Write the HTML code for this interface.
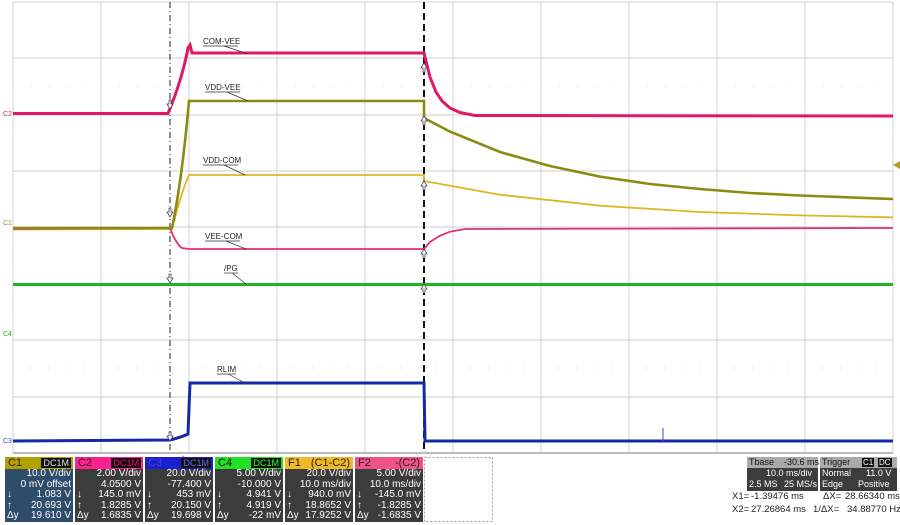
<!DOCTYPE html>
<html><head><meta charset="utf-8"><style>
body{margin:0;width:900px;height:525px;background:#fff;overflow:hidden;font-family:"Liberation Sans",sans-serif;position:relative}
svg{position:absolute;left:0;top:0}
.box{position:absolute;top:457px;width:68px;height:65px;font-size:10px;color:#fff}
.hd{height:12px;line-height:12px;padding-left:3px;position:relative;font-size:11px}
.hd b{position:absolute;right:2px;top:1px;height:10px;line-height:10px;background:#111;font-weight:normal;font-size:9px;padding:0 2px}
.bd{background:#3c3c3c;height:53px;padding-top:0}
.r{height:10.5px;line-height:10.5px;text-align:right;padding-right:2px;position:relative}
.r i{position:absolute;left:2px;font-style:normal}
.tb{position:absolute;font-size:9px;color:#fff;line-height:11px;white-space:nowrap}
.cur{position:absolute;font-size:9.5px;color:#222;white-space:nowrap;line-height:12px}
</style></head><body>
<svg width="900" height="525" viewBox="0 0 900 525">
<g stroke="#d8d8d8" stroke-width="1.2" fill="none">
<line x1="13" y1="2" x2="13" y2="453"/>
<line x1="101" y1="2" x2="101" y2="453"/><line x1="189" y1="2" x2="189" y2="453"/><line x1="277" y1="2" x2="277" y2="453"/><line x1="365" y1="2" x2="365" y2="453"/><line x1="453" y1="2" x2="453" y2="453"/><line x1="541" y1="2" x2="541" y2="453"/><line x1="629" y1="2" x2="629" y2="453"/><line x1="717" y1="2" x2="717" y2="453"/><line x1="805" y1="2" x2="805" y2="453"/><line x1="893" y1="2" x2="893" y2="453"/>
<line x1="13" y1="2" x2="893" y2="2"/><line x1="13" y1="58" x2="893" y2="58"/><line x1="13" y1="115" x2="893" y2="115"/><line x1="13" y1="171" x2="893" y2="171"/><line x1="13" y1="227" x2="893" y2="227"/><line x1="13" y1="284" x2="893" y2="284"/><line x1="13" y1="340" x2="893" y2="340"/><line x1="13" y1="397" x2="893" y2="397"/><line x1="13" y1="453" x2="893" y2="453"/>
</g>
<g stroke="#ccc" stroke-width="1" stroke-dasharray="1 16.6">
<line x1="13" y1="86" x2="893" y2="86"/><line x1="13" y1="368" x2="893" y2="368"/>
</g>
<line x1="13" y1="453" x2="893" y2="453" stroke="#bbb" stroke-width="2"/>
<line x1="170" y1="2" x2="170" y2="453" stroke="#555" stroke-width="1.3" stroke-dasharray="6 3 1 3"/>
<line x1="424" y1="2" x2="424" y2="453" stroke="#111" stroke-width="2" stroke-dasharray="7 4"/>
<path d="M13 284.5H893" stroke="#1fb51f" stroke-width="3" fill="none"/>
<path d="M13 441L170 440Q182 437 188 434L190 383H424L425 441H893" stroke="#1428a8" stroke-width="3" fill="none"/>
<line x1="663" y1="428" x2="663" y2="441" stroke="#3050c0" stroke-width="1"/>
<path d="M13 229.5L172 229Q182 190 189 175H424L424 181L500 194.7L600 205.7L700 212L800 215.4L893 217.4" stroke="#e0b524" stroke-width="1.8" fill="none"/>
<path d="M13 229L170 228Q176 244 182 248L189 249H424L430 242L440 235.7L450 231.7L465 229L893 228" stroke="#e0307a" stroke-width="1.8" fill="none"/>
<path d="M13 228L172 228Q182 180 189 101H424L424 118L450 131.6L500 152L550 166L600 176.6L650 184L700 189L750 193L800 195.5L893 199" stroke="#8a8c12" stroke-width="2.6" fill="none"/>
<path d="M13 113.5L168 113.5Q182 80 188 48L190 45L192 53H424L430 77L436 92L442 101L450 108L460 112.5L475 115.5L893 116" stroke="#e0186a" stroke-width="3" fill="none"/>
<g fill="#222" font-size="8" font-family="Liberation Sans">
<text x="203" y="44">COM-VEE</text><text x="205" y="90">VDD-VEE</text><text x="203" y="163">VDD-COM</text><text x="205" y="239">VEE-COM</text><text x="224" y="271">/PG</text><text x="217" y="372">RLIM</text>
</g>
<g stroke="#333" stroke-width="0.7">
<line x1="203" y1="46" x2="238" y2="46"/><line x1="224" y1="46" x2="248" y2="54"/>
<line x1="205" y1="92" x2="240" y2="92"/><line x1="227" y1="92" x2="248" y2="101"/>
<line x1="203" y1="165" x2="238" y2="165"/><line x1="224" y1="165" x2="245" y2="175"/>
<line x1="205" y1="241" x2="240" y2="241"/><line x1="226" y1="241" x2="246" y2="249"/>
<line x1="224" y1="273" x2="238" y2="273"/><line x1="232" y1="273" x2="246" y2="284"/>
<line x1="217" y1="374" x2="236" y2="374"/><line x1="228" y1="374" x2="245" y2="383"/>
</g>
<g fill="#fff" stroke="#445" stroke-width="0.8">
<path d="M169 100h2v4h2l-3 5-3-5h2z"/><path d="M169 208h2v4h2l-3 5-3-5h2z"/><path d="M169 274h2v4h2l-3 5-3-5h2z"/><path d="M169 432h2v4h2l-3 5-3-5h2z"/>
<path d="M423 72h2v-4h2l-3-5-3 5h2z"/><path d="M423 125h2v-4h2l-3-5-3 5h2z"/><path d="M423 190h2v-4h2l-3-5-3 5h2z"/><path d="M423 258h2v-4h2l-3-5-3 5h2z"/><path d="M423 293h2v-4h2l-3-5-3 5h2z"/>
</g>
<g font-size="7" font-family="Liberation Sans">
<text x="3" y="116" fill="#e0186a">C2</text><text x="3" y="225" fill="#a09020">C1</text><text x="3" y="336" fill="#20b020">C4</text><text x="3" y="443" fill="#3050c0">C3</text>
</g>
<path d="M893 165l7-4v8z" fill="#b0a020"/>
<path d="M183 455l-3 5h6z" fill="#b0a020"/>
<rect x="424.5" y="457.5" width="68" height="64" fill="none" stroke="#999" stroke-dasharray="2 2"/>
</svg>
<div class="box" style="left:5px"><div class="hd" style="background:#b2a000;color:#222">C1<b style="color:#ddd">DC1M</b></div><div class="bd" style="background:#2d4d6b"><div class="r">10.0 V/div</div><div class="r">0 mV offset</div><div class="r"><i>↓</i>1.083 V</div><div class="r"><i>↑</i>20.693 V</div><div class="r"><i>Δy</i>19.610 V</div></div></div>
<div class="box" style="left:75px"><div class="hd" style="background:#ff2090;color:#222">C2<b style="color:#f06">DC1M</b></div><div class="bd"><div class="r">2.00 V/div</div><div class="r">4.0500 V</div><div class="r"><i>↓</i>145.0 mV</div><div class="r"><i>↑</i>1.8285 V</div><div class="r"><i>Δy</i>1.6835 V</div></div></div>
<div class="box" style="left:145px"><div class="hd" style="background:#1a20d0;color:#44c">C3<b style="color:#66f">DC1M</b></div><div class="bd"><div class="r">20.0 V/div</div><div class="r">-77.400 V</div><div class="r"><i>↓</i>453 mV</div><div class="r"><i>↑</i>20.150 V</div><div class="r"><i>Δy</i>19.698 V</div></div></div>
<div class="box" style="left:215px"><div class="hd" style="background:#22e022;color:#111">C4<b style="color:#2f2">DC1M</b></div><div class="bd"><div class="r">5.00 V/div</div><div class="r">-10.000 V</div><div class="r"><i>↓</i>4.941 V</div><div class="r"><i>↑</i>4.919 V</div><div class="r"><i>Δy</i>-22 mV</div></div></div>
<div class="box" style="left:285px"><div class="hd" style="background:#f2b824;color:#222">F1<span style="position:absolute;right:3px">(C1-C2)</span></div><div class="bd"><div class="r">20.0 V/div</div><div class="r">10.0 ms/div</div><div class="r"><i>↓</i>940.0 mV</div><div class="r"><i>↑</i>18.8652 V</div><div class="r"><i>Δy</i>17.9252 V</div></div></div>
<div class="box" style="left:355px"><div class="hd" style="background:#f25088;color:#222">F2<span style="position:absolute;right:3px">-(C2)</span></div><div class="bd"><div class="r">5.00 V/div</div><div class="r">10.0 ms/div</div><div class="r"><i>↓</i>-145.0 mV</div><div class="r"><i>↑</i>-1.8285 V</div><div class="r"><i>Δy</i>-1.6835 V</div></div></div>
<div style="position:absolute;left:747px;top:457px;width:71px;height:34px;background:#3c3c3c"></div>
<div style="position:absolute;left:747px;top:457px;width:71px;height:11px;background:#aaa"></div>
<div style="position:absolute;left:820px;top:457px;width:77px;height:34px;background:#3c3c3c"></div>
<div style="position:absolute;left:820px;top:457px;width:77px;height:11px;background:#aaa"></div>
<div class="tb" style="left:749px;top:457px;color:#111">Tbase</div><div class="tb" style="left:784px;top:457px;color:#111">-30.6 ms</div>
<div class="tb" style="left:822px;top:457px;color:#111">Trigger</div>
<div class="tb" style="left:862px;top:458px;background:#111;font-size:8px;line-height:9px;padding:0 1px">C1</div><div class="tb" style="left:878px;top:458px;background:#111;font-size:8px;line-height:9px;padding:0 1px">DC</div>
<div class="tb" style="left:766px;top:468px">10.0 ms/div</div>
<div class="tb" style="left:749px;top:479px">2.5 MS</div><div class="tb" style="left:784px;top:479px">25 MS/s</div>
<div class="tb" style="left:822px;top:468px">Normal</div><div class="tb" style="left:866px;top:468px">11.0 V</div>
<div class="tb" style="left:822px;top:479px">Edge</div><div class="tb" style="left:858px;top:479px">Positive</div>
<div class="cur" style="left:732px;top:491px">X1=</div><div class="cur" style="left:751px;top:491px">-1.39476 ms</div><div class="cur" style="left:823px;top:491px">ΔX=</div><div class="cur" style="left:845px;top:491px">28.66340 ms</div>
<div class="cur" style="left:732px;top:504px">X2=</div><div class="cur" style="left:751px;top:504px">27.26864 ms</div><div class="cur" style="left:813px;top:504px">1/ΔX=</div><div class="cur" style="left:847px;top:504px">34.88770 Hz</div>
</body></html>
